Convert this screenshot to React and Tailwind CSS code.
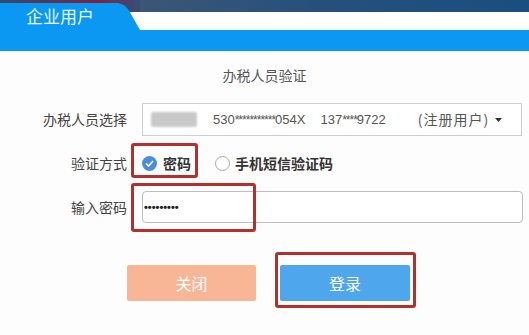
import React from "react";

export default function App() {
  return (
    <div className="w-[529px] h-[335px] overflow-hidden bg-[#fdfdfd] font-['Noto_Sans_CJK_SC','Noto_Sans',sans-serif]">
      {/* header */}
      <div className="flex flex-col h-[51px]">
        <div className="flex h-[30px] bg-[linear-gradient(to_bottom,#28486c_0px,#1e4f7e_12px,#ffffff_12px)]">
          <div className="w-[140px] h-[30px] bg-[linear-gradient(90deg,#2f4a70,#7a2440_70%,#33507a)] relative">
            <div className="absolute inset-0 bg-[linear-gradient(to_bottom,transparent_12px,#ffffff_12px)]" />
            <div className="absolute inset-0 bg-[#0a98f3] [clip-path:polygon(0_3px,118px_3px,124px_5px,128px_9px,140px_30px,0_30px)] flex items-end pl-[26px] pb-[3px]">
              <span className="text-[17px] leading-[22px] text-[#eaf7ff]">企业用户</span>
            </div>
          </div>
          <div className="flex-1 flex flex-col">
            <div className="h-[12px] bg-[linear-gradient(90deg,#3b5676,#24507c_50%,#1a4e80)]" />
            <div className="flex-1 bg-white" />
          </div>
        </div>
        <div className="flex-1 bg-[#0a98f3]" />
      </div>

      {/* body */}
      <div className="relative">
        <div className="pt-[14px] text-center text-[14px] leading-[20px] text-[#555]">办税人员验证</div>

        <div className="flex items-center mt-[18px]">
          <div className="w-[127px] text-right text-[14px] text-[#444]">办税人员选择</div>
          <div className="ml-[15px] w-[380px] h-[33px] border border-[#cfcfcf] bg-white flex items-center text-[13px] text-[#555] overflow-hidden">
            <div className="ml-[8px] w-[46px] h-[15px] bg-[#c9c9c9] blur-[1px] rounded-[2px] shrink-0" />
            <span className="ml-[16px] whitespace-nowrap font-['Liberation_Sans',sans-serif]">530<span className="text-[12px] tracking-[-1px]">***********</span>054X</span>
            <span className="ml-[15px] whitespace-nowrap font-['Liberation_Sans',sans-serif]">137<span className="text-[12px] tracking-[-1px]">****</span>9722</span>
            <span className="ml-[32px] whitespace-nowrap w-[70px] shrink-0 overflow-hidden text-[14px] tracking-[1px]">(注册用户)</span>
            <svg width="7" height="4" viewBox="0 0 7 4" className="ml-[7px] shrink-0"><path d="M0 0h7L3.5 4z" fill="#333" /></svg>
          </div>
        </div>

        <div className="flex items-center mt-[10px] h-[34px]">
          <div className="w-[127px] text-right text-[14px] text-[#444]">验证方式</div>
          <div className="ml-[15px] flex items-center">
            <div className="w-[15px] h-[15px] rounded-full bg-[#4a8edb] flex items-center justify-center">
              <svg width="9" height="7" viewBox="0 0 9 7"><path d="M1 3.5L3.5 6L8 1" stroke="#fff" strokeWidth="1.6" fill="none" /></svg>
            </div>
            <span className="ml-[6px] text-[14px] font-bold text-[#333]">密码</span>
            <div className="ml-[24px] w-[15px] h-[15px] rounded-full border border-[#a9a9a9] bg-white" />
            <span className="ml-[5px] text-[14px] font-bold text-[#333]">手机短信验证码</span>
          </div>
        </div>

        <div className="flex items-center mt-[11px]">
          <div className="w-[127px] text-right text-[14px] text-[#444]">输入密码</div>
          <div className="ml-[15px] w-[381px] h-[32px] border border-[#bdbdbd] rounded-[4px] bg-white flex items-center pl-[1px] text-[#222] text-[11px] font-['Liberation_Sans',sans-serif] font-bold">
            •••••••••
          </div>
        </div>

        <div className="flex mt-[42px] ml-[127px] gap-[24px]">
          <div className="w-[129px] h-[36px] rounded-[2px] bg-[#f8b696] flex items-center justify-center text-[16px] text-white">关闭</div>
          <div className="w-[130px] h-[36px] rounded-[2px] bg-[#4ea7ed] flex items-center justify-center text-[16px] text-white">登录</div>
        </div>

        {/* annotation boxes */}
        <div className="absolute left-[131px] top-[92px] w-[67px] h-[35px] border-[3px] border-[#b3302c] rounded-[3px]" />
        <div className="absolute left-[131px] top-[132px] w-[125px] h-[49px] border-[3px] border-[#b3302c] rounded-[3px]" />
        <div className="absolute left-[275px] top-[201px] w-[141px] h-[56px] border-[3px] border-[#b3302c] rounded-[3px]" />
      </div>
    </div>
  );
}
